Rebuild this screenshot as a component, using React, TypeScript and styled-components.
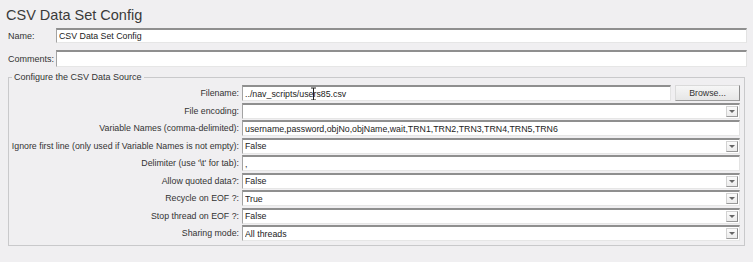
import React from 'react';
import styled, { createGlobalStyle } from 'styled-components';

const GlobalStyle = createGlobalStyle`
	html, body {
		margin: 0;
		padding: 0;
		background: #f0eff1;
	}
	body {
		font-family: "Liberation Sans", Arial, sans-serif;
		color: #2a2a2a;
	}
`

const Page = styled.div`
	width: 753px;
	height: 262px;
	box-sizing: border-box;
	padding: 0 6px 0 8px;
	overflow: hidden;
`

const Title = styled.h1`
	margin: 4px 0 0 -2px;
	font-size: 14.5px;
	font-weight: normal;
	line-height: 22px;
	color: #3a3a3a;
`

const TopRow = styled.div<{ $gap: number }>`
	display: grid;
	grid-template-columns: 48px 1fr;
	align-items: center;
	margin-top: ${({ $gap }) => $gap}px;
	font-size: 9px;
	color: #333;
`

const Field = styled.div<{ $h?: number }>`
	height: ${({ $h }) => $h ?? 16}px;
	box-sizing: border-box;
	display: flex;
	align-items: center;
	background: #fff;
	border-top: 2px solid #8f8f8f;
	border-left: 1px solid #a3a3a3;
	border-right: 1px solid #e3e3e3;
	border-bottom: 1px solid #e6e6e6;
	padding-left: 2px;
	font-size: 8.8px;
	color: #222;
	white-space: nowrap;
	overflow: hidden;
	position: relative;
`

const Value = styled.span`
	flex: 1;
	overflow: hidden;
`

const ArrowButton = styled.span`
	width: 12px;
	height: 11px;
	margin-right: 1px;
	box-sizing: border-box;
	display: flex;
	align-items: center;
	justify-content: center;
	background: linear-gradient(#fbfbfb, #ececec);
	border: 1px solid #d2d2d2;
	border-right-color: #8c8c8c;
	border-bottom-color: #9a9a9a;

	&::after {
		content: "";
		border-left: 3px solid transparent;
		border-right: 3px solid transparent;
		border-top: 3px solid #666;
	}
`

const GroupBox = styled.fieldset`
	margin: 5px 2px 0 0;
	padding: 2px 4px 4px 0;
	border: 1px solid #c9c9cb;
	min-width: 0;
`

const Legend = styled.legend`
	margin-left: 3px;
	padding: 0 2px;
	font-size: 9px;
	line-height: 11px;
	color: #333;
`

const Rows = styled.div`
	display: grid;
	grid-template-columns: 230px 1fr;
	column-gap: 3px;
	row-gap: 1.5px;
	align-items: center;
`

const Label = styled.label`
	text-align: right;
	font-size: 8.8px;
	white-space: nowrap;
	color: #333;
`

const FileLine = styled.div`
	display: flex;
	gap: 4px;
`

const BrowseButton = styled.button`
	width: 65px;
	height: 16px;
	padding: 0;
	box-sizing: border-box;
	font-family: inherit;
	font-size: 8.8px;
	color: #333;
	background: linear-gradient(#f6f6f6, #e6e6e6);
	border: 1px solid #dadada;
	border-right-color: #8a8a8a;
	border-bottom-color: #9d9d9d;
`

const Cursor = styled.svg`
	position: absolute;
	left: 67px;
	top: 0;
`

type Row = { label: string; value: string; kind: 'text' | 'select' | 'file' }

const rows: Row[] = [
	{ label: 'Filename:', value: '../nav_scripts/users85.csv', kind: 'file' },
	{ label: 'File encoding:', value: '', kind: 'select' },
	{ label: 'Variable Names (comma-delimited):', value: 'username,password,objNo,objName,wait,TRN1,TRN2,TRN3,TRN4,TRN5,TRN6', kind: 'text' },
	{ label: 'Ignore first line (only used if Variable Names is not empty):', value: 'False', kind: 'select' },
	{ label: "Delimiter (use '\\t' for tab):", value: ',', kind: 'text' },
	{ label: 'Allow quoted data?:', value: 'False', kind: 'select' },
	{ label: 'Recycle on EOF ?:', value: 'True', kind: 'select' },
	{ label: 'Stop thread on EOF ?:', value: 'False', kind: 'select' },
	{ label: 'Sharing mode:', value: 'All threads', kind: 'select' },
]

const App = () => {
	return (
		<Page>
			<GlobalStyle />
			<Title>CSV Data Set Config</Title>

			<TopRow $gap={2}>
				<span>Name:</span>
				<Field $h={15}><Value>CSV Data Set Config</Value></Field>
			</TopRow>
			<TopRow $gap={7}>
				<span>Comments:</span>
				<Field $h={17} />
			</TopRow>

			<GroupBox>
				<Legend>Configure the CSV Data Source</Legend>
				<Rows>
					{rows.map((r, i) => (
						<React.Fragment key={i}>
							<Label>{r.label}</Label>
							{r.kind === 'file' ? (
								<FileLine>
									<Field style={{ flex: 1 }}>
										<Value>{r.value}</Value>
										<Cursor width="7" height="14" viewBox="0 0 7 14">
											<path d="M1 1h5M3.5 1v12M1 13h5" stroke="#222" strokeWidth="1" fill="none" />
										</Cursor>
									</Field>
									<BrowseButton>Browse...</BrowseButton>
								</FileLine>
							) : (
								<Field>
									<Value>{r.value}</Value>
									{r.kind === 'select' && <ArrowButton />}
								</Field>
							)}
						</React.Fragment>
					))}
				</Rows>
			</GroupBox>
		</Page>
	)
}

export default App
